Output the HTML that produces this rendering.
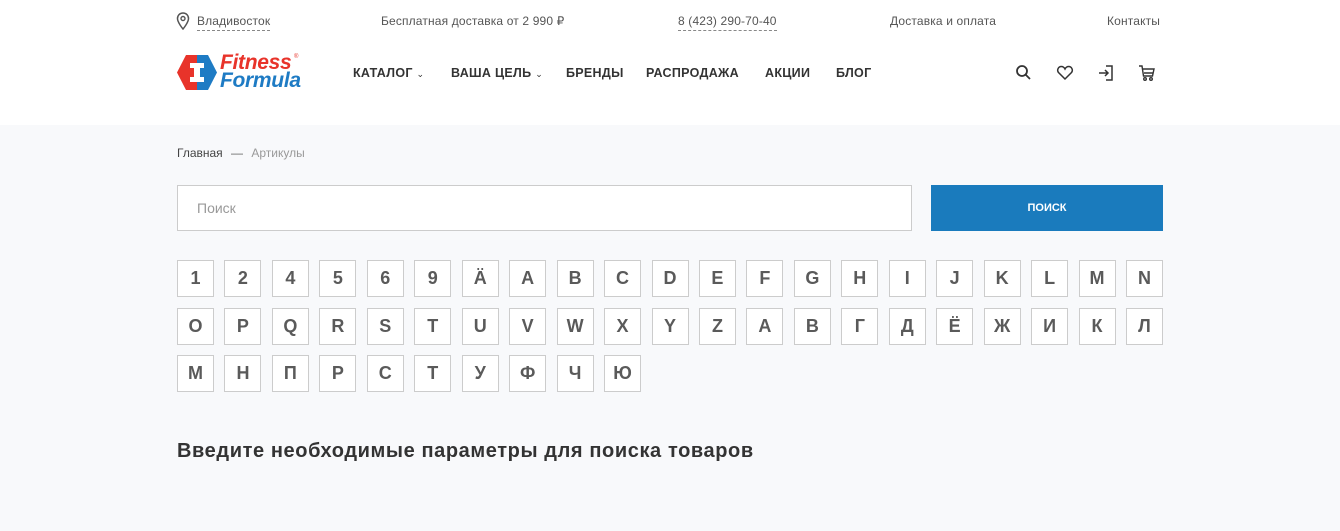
<!DOCTYPE html>
<html><head><meta charset="utf-8"><style>
*{margin:0;padding:0;box-sizing:border-box}
body{width:1340px;height:531px;background:#f8f9fb;font-family:"Liberation Sans",sans-serif;position:relative;overflow:hidden;color:#333}
.hdr{position:absolute;left:0;top:0;width:1340px;height:125px;background:#fff}
.a{position:absolute;white-space:nowrap}
.top{font-size:12px;color:#555;top:14px;letter-spacing:0.15px}
.dot{border-bottom:1px dashed #888;padding-bottom:2px}
.nav{top:66px;font-size:12.5px;font-weight:bold;color:#333;letter-spacing:0.3px}
.box{position:absolute;width:37px;height:37px;border:1px solid #ccc;background:#fff;font-weight:bold;font-size:18px;color:#5a5a5a;text-align:center;line-height:35px}
</style></head><body>
<div class="hdr"></div>
<svg class="a" style="left:176px;top:12px" width="14" height="18" viewBox="0 0 14 18"><path d="M7 1C3.7 1 1.5 3.5 1.5 6.5 1.5 10.5 7 17 7 17S12.5 10.5 12.5 6.5C12.5 3.5 10.3 1 7 1Z" fill="none" stroke="#555" stroke-width="1.5"/><circle cx="7" cy="6.5" r="2" fill="none" stroke="#555" stroke-width="1.4"/></svg>
<div class="a top" style="left:197px"><span class="dot">Владивосток</span></div>
<div class="a top" style="left:381px">Бесплатная доставка от 2 990 ₽</div>
<div class="a top" style="left:678px"><span class="dot">8 (423) 290-70-40</span></div>
<div class="a top" style="left:890px">Доставка и оплата</div>
<div class="a top" style="left:1107px">Контакты</div>
<svg class="a" style="left:176px;top:54px" width="42" height="37" viewBox="0 0 42 37"><path d="M10 1H21V36H10L1 18.5Z" fill="#e8332a"/><path d="M21 1H32L41 18.5 32 36H21Z" fill="#1e7bc4"/><path d="M14 9H28V14H24V23H28V28H14V23H18V14H14Z" fill="#fff"/></svg>
<div class="a" style="left:220px;top:51px;font-size:21px;font-weight:bold;font-style:italic;color:#e8332a;letter-spacing:-0.3px">Fitness</div>
<div class="a" style="left:294px;top:54px;font-size:6px;color:#e8332a">®</div>
<div class="a" style="left:220px;top:69px;font-size:21px;font-weight:bold;font-style:italic;color:#1e7bc4;letter-spacing:-0.3px">Formula</div>
<div class="a nav" style="left:353px">КАТАЛОГ <span style="font-weight:normal;font-size:9px">⌄</span></div>
<div class="a nav" style="left:451px">ВАША ЦЕЛЬ <span style="font-weight:normal;font-size:9px">⌄</span></div>
<div class="a nav" style="left:566px">БРЕНДЫ</div>
<div class="a nav" style="left:646px">РАСПРОДАЖА</div>
<div class="a nav" style="left:765px">АКЦИИ</div>
<div class="a nav" style="left:836px">БЛОГ</div>
<svg class="a" style="left:1015px;top:64px" width="18" height="18" viewBox="0 0 18 18" fill="none" stroke="#333" stroke-width="1.8"><circle cx="7" cy="7" r="5"/><path d="M10.5 10.5L15 15"/></svg>
<svg class="a" style="left:1056px;top:64px" width="18" height="18" viewBox="0 0 18 18" fill="none" stroke="#333" stroke-width="1.5"><path d="M9 15L2.5 8.5C0.5 6 2.5 2.5 5.3 2.5 7 2.5 8.3 3.7 9 5 9.7 3.7 11 2.5 12.7 2.5 15.5 2.5 17.5 6 15.5 8.5Z"/></svg>
<svg class="a" style="left:1097px;top:64px" width="18" height="18" viewBox="0 0 18 18" fill="none" stroke="#333" stroke-width="1.5"><path d="M9 2H15V16H9M2 9H11M8 6L11 9 8 12"/></svg>
<svg class="a" style="left:1138px;top:64px" width="18" height="18" viewBox="0 0 18 18" fill="none" stroke="#333" stroke-width="1.4"><path d="M1 2H4L5.5 12H14.5L16 5H4.5M6 9H15"/><circle cx="7" cy="15" r="1.3"/><circle cx="13" cy="15" r="1.3"/></svg>
<div class="a" style="left:177px;top:146px;font-size:12px;color:#444">Главная <span style="color:#666;margin:0 5px">—</span> <span style="color:#999">Артикулы</span></div>
<div class="a" style="left:177px;top:185px;width:735px;height:46px;background:#fff;border:1px solid #ccc;font-size:14px;color:#999;padding:14px 0 0 19px">Поиск</div>
<div class="a" style="left:931px;top:185px;width:232px;height:46px;background:#1a7bbd;color:#fff;font-size:11px;font-weight:bold;text-align:center;line-height:46px">ПОИСК</div>
<div id="g"></div>
<div class="a" style="left:177px;top:440px;font-size:20px;font-weight:bold;color:#333;letter-spacing:0.6px">Введите необходимые параметры для поиска товаров</div>
<script>
var rows=[["1","2","4","5","6","9","Ä","A","B","C","D","E","F","G","H","I","J","K","L","M","N"],["O","P","Q","R","S","T","U","V","W","X","Y","Z","А","В","Г","Д","Ё","Ж","И","К","Л"],["М","Н","П","Р","С","Т","У","Ф","Ч","Ю"]];
var h="";rows.forEach(function(r,i){r.forEach(function(c,j){h+='<div class="box" style="left:'+(177+j*47.45)+'px;top:'+(260+i*47.5)+'px">'+c+'</div>';});});
document.getElementById("g").innerHTML=h;
</script>
</body></html>
